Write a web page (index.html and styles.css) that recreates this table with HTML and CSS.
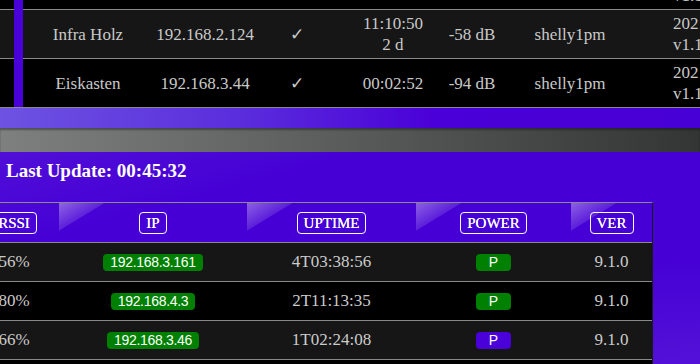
FILE: index.html
```html
<!DOCTYPE html>
<html lang="de">
<head>
<meta charset="utf-8">
<title>Shelly Übersicht</title>
<link rel="stylesheet" href="styles.css">
</head>
<body>
<div class="page">
  <section class="devices">
    <div class="drow">
      <div class="c"></div><div class="c mark"></div>
      <div class="c"></div><div class="c"></div><div class="c"></div>
      <div class="c"></div><div class="c"></div><div class="c"></div>
      <div class="c fw">20210323-105928<br>v1.10.1-gf276b51</div>
    </div>
    <div class="drow">
      <div class="c"></div><div class="c mark"></div>
      <div class="c">Infra Holz</div><div class="c">192.168.2.124</div><div class="c check">✓</div>
      <div class="c">11:10:50<br>2 d</div><div class="c">-58 dB</div><div class="c">shelly1pm</div>
      <div class="c fw">20210323-105928<br>v1.10.1-gf276b51</div>
    </div>
    <div class="drow">
      <div class="c"></div><div class="c mark"></div>
      <div class="c">Eiskasten</div><div class="c">192.168.3.44</div><div class="c check">✓</div>
      <div class="c">00:02:52</div><div class="c">-94 dB</div><div class="c">shelly1pm</div>
      <div class="c fw">20210323-105928<br>v1.10.1-gf276b51</div>
    </div>
  </section>

  <div class="band"></div>
  <div class="bar"></div>

  <main class="panel">
    <h2 class="updated">Last Update: 00:45:32</h2>
    <div class="status">
      <div class="srow shead">
        <div class="h first"><span class="hbox">RSSI</span></div>
        <div class="h"><span class="hbox">IP</span></div>
        <div class="h"><span class="hbox">UPTIME</span></div>
        <div class="h"><span class="hbox">POWER</span></div>
        <div class="h"><span class="hbox">VER</span></div>
      </div>
      <div class="srow data">
        <div class="d">56%</div>
        <div class="d"><span class="badge">192.168.3.161</span></div>
        <div class="d">4T03:38:56</div>
        <div class="d"><span class="badge pw">P</span></div>
        <div class="d">9.1.0</div>
      </div>
      <div class="srow data">
        <div class="d">80%</div>
        <div class="d"><span class="badge">192.168.4.3</span></div>
        <div class="d">2T11:13:35</div>
        <div class="d"><span class="badge pw">P</span></div>
        <div class="d">9.1.0</div>
      </div>
      <div class="srow data">
        <div class="d">66%</div>
        <div class="d"><span class="badge">192.168.3.46</span></div>
        <div class="d">1T02:24:08</div>
        <div class="d"><span class="badge pw off">P</span></div>
        <div class="d">9.1.0</div>
      </div>
      <div class="srow data">
        <div class="d"></div>
        <div class="d"></div>
        <div class="d"></div>
        <div class="d"></div>
        <div class="d"></div>
      </div>
    </div>
  </main>
</div>
</body>
</html>
```

FILE: styles.css
```css
html, body {
  margin: 0;
  padding: 0;
  background: #000;
  overflow: hidden;
}
body {
  width: 700px;
  height: 364px;
  font-family: "Liberation Serif", "DejaVu Serif", serif;
}
.page {
  width: 700px;
  overflow: hidden;
}

/* top device table */
.devices {
  margin-top: -39px;
  color: #c9c9c9;
  font-size: 17px;
}
.drow {
  display: grid;
  grid-template-columns: 14px 9px 130px 104px 80px 112px 46px 150px 80px;
  height: 49px;
  background: #000;
}
.drow:nth-child(2) {
  background: #161616;
}
.c {
  display: flex;
  align-items: center;
  justify-content: center;
  text-align: center;
  line-height: 21px;
  border-bottom: 1px solid #8a8a8a;
  white-space: nowrap;
}
.c.mark {
  background: #4a00d8;
  border-bottom: none;
}
.drow:last-child .c.mark {
  border-bottom: 1px solid #8a8a8a;
}
.c.check {
  font-family: "DejaVu Sans", sans-serif;
  font-size: 17px;
}
.c.fw {
  justify-content: flex-start;
  text-align: left;
  padding-left: 28px;
  overflow: hidden;
}

/* bands */
.band {
  height: 20px;
  background: linear-gradient(to right, #6d53e2 0%, #5a2cdc 35%, #4a00d8 62%, #4700d6 100%);
}
.bar {
  height: 24px;
  background: linear-gradient(to right, #7d807f 0%, #5c5f5e 45%, #333535 100%);
  box-shadow: inset 0 2px 2px rgba(0, 0, 0, 0.35);
}

/* main panel */
.panel {
  height: 212px;
  padding: 8px 0 0 6px;
  box-sizing: border-box;
  background:
    linear-gradient(165deg, rgba(255, 255, 255, 0.06) 0%, rgba(255, 255, 255, 0) 25%),
    radial-gradient(ellipse at 100% 100%, rgba(255, 255, 255, 0.07) 0%, rgba(255, 255, 255, 0) 35%),
    #4600d5;
}
.updated {
  margin: 0;
  font-size: 19px;
  line-height: 22px;
  font-weight: bold;
  color: #fff;
}
.status {
  margin: 20px 0 0 -37px;
  width: 683px;
  border-top: 1px solid #8a8a8a;
  border-right: 1px solid #1a1a1a;
}
.srow {
  display: grid;
  grid-template-columns: 90px 188px 169px 155px 81px;
  border-bottom: 1px solid #8a8a8a;
}
.shead {
  height: 39px;
}
.data {
  height: 38px;
  background: #000;
  color: #cbcbcb;
  font-size: 17px;
}
.data:nth-child(2n) {
  background: #161616;
}
.h, .d {
  position: relative;
  display: flex;
  align-items: center;
  justify-content: center;
  white-space: nowrap;
}
.h::before {
  content: "";
  position: absolute;
  top: 0;
  left: 0;
  width: 46px;
  height: 28px;
  background: linear-gradient(to bottom right, rgba(255, 255, 255, 0.38) 0%, rgba(255, 255, 255, 0.12) 49%, rgba(255, 255, 255, 0) 50%);
}
.h.first::before {
  display: none;
}
.hbox {
  position: relative;
  border: 1px solid #fff;
  border-radius: 4px;
  padding: 0 6px;
  line-height: 20px;
  font-size: 15px;
  color: #fff;
  text-shadow: 0 0 0.4px #fff;
}
.badge {
  background: #008000;
  color: #fff;
  font-family: "Liberation Sans", Arial, sans-serif;
  font-size: 14px;
  letter-spacing: -0.3px;
  line-height: 17px;
  padding: 0 7px;
  border-radius: 4px;
}
.badge.pw {
  padding: 0 13px;
  letter-spacing: 0;
}
.badge.off {
  background: #4a00d8;
}
```
